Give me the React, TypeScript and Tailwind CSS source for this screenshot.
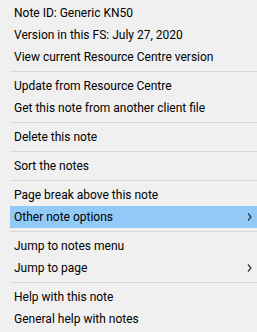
type Item = { label: string; sub?: boolean; active?: boolean } | "sep";

const items: Item[] = [
  { label: "Note ID: Generic KN50" },
  { label: "Version in this FS: July 27, 2020" },
  { label: "View current Resource Centre version" },
  "sep",
  { label: "Update from Resource Centre" },
  { label: "Get this note from another client file" },
  "sep",
  { label: "Delete this note" },
  "sep",
  { label: "Sort the notes" },
  "sep",
  { label: "Page break above this note" },
  { label: "Other note options", sub: true, active: true },
  "sep",
  { label: "Jump to notes menu" },
  { label: "Jump to page", sub: true },
  "sep",
  { label: "Help with this note" },
  { label: "General help with notes" },
];

const Chevron = () => (
  <svg width="5" height="8" viewBox="0 0 5 8" className="text-[#333]">
    <path d="M1 0.5 L4 4 L1 7.5" fill="none" stroke="currentColor" strokeWidth="1.2" />
  </svg>
);

export default function App() {
  return (
    <div className="w-[257px] h-[332px] overflow-hidden bg-[#f0f0f0] pt-[2px] pl-[10px] text-[12px] text-black [font-family:Roboto,sans-serif]">
      {items.map((it, i) =>
        it === "sep" ? (
          <div key={i} className="h-[7px] pt-[3px]">
            <div className="h-px bg-[#d7d7d7]" />
          </div>
        ) : (
          <div
            key={i}
            className={
              "h-[22px] flex items-center justify-between pl-[4px] pr-[5px] " +
              (it.active ? "bg-[#91c9f7]" : "")
            }
          >
            <span className="leading-none">{it.label}</span>
            {it.sub && <Chevron />}
          </div>
        )
      )}
    </div>
  );
}
